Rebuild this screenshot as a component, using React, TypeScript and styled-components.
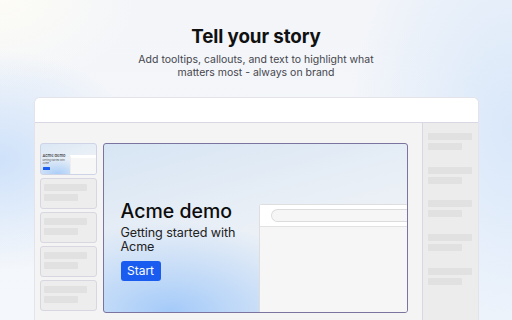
import React from 'react';
import styled, { createGlobalStyle } from 'styled-components';

const GlobalStyle = createGlobalStyle`
  html, body {
    margin: 0;
    padding: 0;
    width: 512px;
    height: 320px;
    overflow: hidden;
  }
  body {
    font-family: Inter, 'Noto Sans', sans-serif;
    color: #111;
  }
  * {
    box-sizing: border-box;
  }
`;

const Page = styled.div`
  width: 512px;
  height: 320px;
  overflow: hidden;
  display: flex;
  flex-direction: column;
  align-items: center;
  background:
    radial-gradient(ellipse 140px 110px at 0% 50%, rgba(200, 222, 250, 0.85), rgba(200, 222, 250, 0) 100%),
    radial-gradient(ellipse 160px 260px at 100% 40%, rgba(214, 230, 250, 0.9), rgba(214, 230, 250, 0) 100%),
    radial-gradient(ellipse 140px 90px at 0% 0%, #fdfcf6, rgba(253, 252, 246, 0) 100%),
    linear-gradient(180deg, #f3f5f9 0%, #f4f7fb 100%);
`;

const Header = styled.header`
  padding-top: 25px;
  display: flex;
  flex-direction: column;
  align-items: center;
`;

const Title = styled.h1`
  margin: 0;
  font-size: 18.8px;
  line-height: 23px;
  font-weight: 700;
  letter-spacing: -0.1px;
  color: #111;
`;

const Subtitle = styled.p`
  margin: 6px 0 0;
  width: 250px;
  font-size: 10.5px;
  line-height: 12.5px;
  color: #45454d;
  text-align: center;
`;

const Window = styled.div`
  margin-top: 18px;
  width: 445px;
  flex: 1;
  background: #f4f4f4;
  border: 1px solid #e4e3ea;
  border-bottom: none;
  border-radius: 6px 6px 0 0;
  display: flex;
  flex-direction: column;
  overflow: hidden;
`;

const TopBar = styled.div`
  height: 25px;
  flex: none;
  background: #fff;
  border-bottom: 1px solid #d9d7e4;
`;

const Body = styled.div`
  flex: 1;
  display: flex;
`;

const ThumbColumn = styled.div`
  padding: 20px 0 0 5px;
  display: flex;
  flex-direction: column;
  gap: 3px;
`;

const Thumb = styled.div`
  width: 57px;
  height: 31px;
  flex: none;
  border: 1px solid #d8d6e0;
  border-radius: 3px;
  background: #ededed;
  padding: 5px 0 0 3px;
  display: flex;
  flex-direction: column;
  gap: 3px;
  overflow: hidden;
`;

const Skel = styled.div<{ $w: number }>`
  width: ${(p) => p.$w}px;
  height: 7px;
  background: #e1e1e1;
  border-radius: 1px;
`;

const MiniThumb = styled.div`
  width: 57px;
  height: 32px;
  flex: none;
  border: 1px solid #cfd3e6;
  border-radius: 3px;
  overflow: hidden;
  display: flex;
  background:
    radial-gradient(ellipse 30px 16px at 30% 100%, #a9cdf8, rgba(169, 205, 248, 0) 100%),
    linear-gradient(160deg, #dae7f5 0%, #eef2f6 70%);
`;

const MiniText = styled.div`
  width: 29px;
  padding: 9px 0 0 2px;
  display: flex;
  flex-direction: column;
`;

const MiniTitle = styled.div`
  font-size: 4px;
  line-height: 5px;
  font-weight: 500;
  white-space: nowrap;
  color: #333;
`;

const MiniSub = styled.div`
  font-size: 2.4px;
  line-height: 3px;
  color: #555;
  margin-top: 1px;
`;

const MiniButton = styled.div`
  width: 7px;
  height: 3px;
  margin-top: 1.5px;
  background: #1a5cf0;
  border-radius: 0.5px;
`;

const MiniBrowser = styled.div`
  flex: 1;
  margin-top: 11px;
  background: #f7f7f7;
  border-top: 3px solid #fff;
  border-left: 1px solid #eee;
`;

const Canvas = styled.div`
  margin: 20px 0 0 6px;
  width: 305px;
  height: 170px;
  border: 1px solid #7b749f;
  border-radius: 3px;
  overflow: hidden;
  display: flex;
  background:
    radial-gradient(ellipse 170px 90px at 22% 100%, rgba(160, 200, 249, 0.95), rgba(160, 200, 249, 0) 100%),
    linear-gradient(165deg, #d7e5f4 0%, #e9eff6 45%, #eef2f6 70%, #e8eef5 100%);
`;

const Hero = styled.div`
  width: 155px;
  flex: none;
  padding: 55px 0 0 17px;
  display: flex;
  flex-direction: column;
`;

const HeroTitle = styled.h2`
  margin: 0;
  font-size: 19.5px;
  line-height: 24px;
  font-weight: 500;
  color: #0c0c0c;
  white-space: nowrap;
`;

const HeroSub = styled.p`
  margin: 3px 0 0;
  font-size: 12.6px;
  line-height: 13.5px;
  letter-spacing: -0.1px;
  color: #222;
`;

const StartButton = styled.button`
  margin-top: 8px;
  width: 40px;
  height: 20px;
  padding: 0;
  border: none;
  border-radius: 3px;
  background: #1a5cf0;
  color: #fff;
  font-family: Inter, sans-serif;
  font-size: 12px;
  line-height: 20px;
`;

const Browser = styled.div`
  flex: 1;
  margin-top: 60px;
  background: #f6f6f6;
  border: 1px solid #dedede;
  border-right: none;
  border-bottom: none;
  border-radius: 3px 0 0 0;
  display: flex;
  flex-direction: column;
`;

const BrowserBar = styled.div`
  height: 22px;
  flex: none;
  background: #fff;
  border-bottom: 1px solid #e2e2e2;
  padding: 4px 0 0 11px;
`;

const UrlPill = styled.div`
  height: 13px;
  background: #f6f6f6;
  border: 1px solid #dcdcdc;
  border-right: none;
  border-radius: 7px 0 0 7px;
`;

const SidePanel = styled.aside`
  margin-left: auto;
  width: 56px;
  background: #ececec;
  border-left: 1px solid #d9d7e4;
  padding: 10px 0 0 5px;
  display: flex;
  flex-direction: column;
`;

const SideGroup = styled.div`
  display: flex;
  flex-direction: column;
  gap: 3px;
  margin-bottom: 16.7px;
`;

export default function App() {
  return (
    <Page>
      <GlobalStyle />
      <Header>
        <Title>Tell your story</Title>
        <Subtitle>
          Add tooltips, callouts, and text to highlight what matters most - always on brand
        </Subtitle>
      </Header>

      <Window>
        <TopBar />
        <Body>
          <ThumbColumn>
            <MiniThumb>
              <MiniText>
                <MiniTitle>Acme demo</MiniTitle>
                <MiniSub>Getting started with Acme</MiniSub>
                <MiniButton />
              </MiniText>
              <MiniBrowser />
            </MiniThumb>
            {[0, 1, 2, 3].map((i) => (
              <Thumb key={i}>
                <Skel $w={43} />
                <Skel $w={34} />
              </Thumb>
            ))}
          </ThumbColumn>

          <Canvas>
            <Hero>
              <HeroTitle>Acme demo</HeroTitle>
              <HeroSub>Getting started with Acme</HeroSub>
              <StartButton>Start</StartButton>
            </Hero>
            <Browser>
              <BrowserBar>
                <UrlPill />
              </BrowserBar>
            </Browser>
          </Canvas>

          <SidePanel>
            {[0, 1, 2, 3, 4].map((i) => (
              <SideGroup key={i}>
                <Skel $w={44} />
                <Skel $w={34} />
              </SideGroup>
            ))}
          </SidePanel>
        </Body>
      </Window>
    </Page>
  );
}
